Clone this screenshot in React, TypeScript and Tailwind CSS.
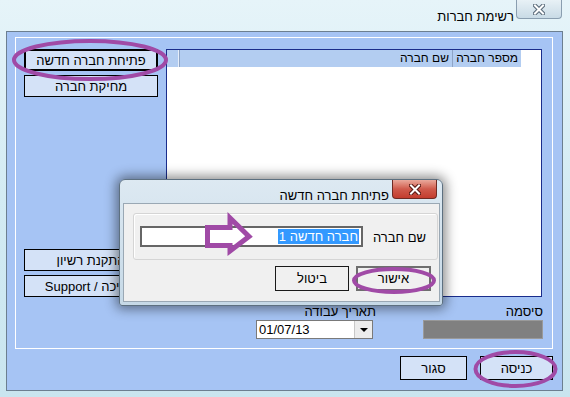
import React from "react";

function WinX({ light }: { light?: boolean }) {
  return (
    <svg width="12" height="11" viewBox="0 0 12 11">
      <path d="M2 1.5 L10 9.5 M10 1.5 L2 9.5" stroke={light ? "#5c6c7b" : "#5a1a14"} strokeWidth="4.2" strokeLinecap="square" />
      <path d="M2 1.5 L10 9.5 M10 1.5 L2 9.5" stroke="#ffffff" strokeWidth="2" strokeLinecap="square" />
    </svg>
  );
}

function Btn({ children, className = "" }: { children: React.ReactNode; className?: string }) {
  return (
    <div
      dir="rtl"
      className={`flex h-[22px] w-[134px] items-center justify-center overflow-hidden whitespace-nowrap border border-black bg-[#d4e2f7] text-[13px] leading-[15px] ${className}`}
    >
      {children}
    </div>
  );
}

export default function App() {
  return (
    <div className="relative h-[397px] w-[570px] overflow-hidden bg-gradient-to-b from-[#e6f4f9] via-[#d3ebf3] to-[#c9e5ef] font-['Liberation_Sans','DejaVu_Sans',sans-serif] text-[13px] text-black">
      {/* title bar */}
      <div className="flex h-[31px] items-start justify-end pr-[8px]">
        <div dir="rtl" className="pr-[2px] pt-[9px] leading-[15px]">רשימת חברות</div>
        <div className="flex h-[19px] w-[46px] items-center justify-center rounded-b-[4px] border border-t-0 border-[#8a9eb0] bg-gradient-to-b from-[#e8f1f6] to-[#c9dbe6]">
          <WinX light />
        </div>
      </div>

      {/* client area */}
      <div className="mx-[6px] flex h-[360px] w-[557px] flex-col border border-[#6c7f90] bg-[#a6c4f4]">
        {/* group box */}
        <div className="ml-[8px] mr-[9px] mt-[5px] flex h-[312px] flex-col border border-white">
          <div className="flex h-[259px] gap-[8px] pl-[8px] pr-[9px] pt-[11px]">
            {/* left buttons */}
            <div className="flex w-[134px] flex-col">
              <Btn className="border-2 border-[#6a6a6a]">פתיחת חברה חדשה</Btn>
              <Btn className="mt-[4px]">מחיקת חברה</Btn>
              <Btn className="mt-auto">התקנת רשיון</Btn>
              <Btn className="mt-[4px]">תמיכה / Support</Btn>
            </div>
            {/* list */}
            <div className="h-[248px] w-[376px] border border-[#1a2d8c] bg-white">
              <div className="flex h-[17px] whitespace-nowrap text-[12px]">
                <div className="h-full w-[12px] border-r border-[#e6eefa] bg-[#b3cdf1]" />
                <div dir="rtl" className="flex h-full w-[273px] items-center border-l border-[#8ea4c6] bg-[#b3cdf1] pr-[3px] leading-[15px]">
                  שם חברה
                </div>
                <div dir="rtl" className="flex h-full w-[69px] items-center overflow-hidden border-l border-[#8ea4c6] bg-[#b3cdf1] pr-[3px] leading-[15px]">
                  מספר חברה
                </div>
              </div>
            </div>
          </div>
          {/* bottom fields */}
          <div className="mt-[7px] flex justify-end gap-[47px] pr-[9px]">
            <div className="flex w-[120px] flex-col items-end">
              <div dir="rtl" className="leading-[15px]">תאריך עבודה</div>
              <div className="mr-[3px] mt-[1px] flex h-[19px] w-[117px] border border-[#7a7a7a] bg-white">
                <div className="flex-1 pl-[2px] text-[13px] leading-[17px]">01/07/13</div>
                <div className="flex w-[18px] items-center justify-center border-l border-[#c8c8c8] bg-[#ececec]">
                  <svg width="8" height="4" viewBox="0 0 8 4">
                    <path d="M0 0 L8 0 L4 4 Z" fill="#000" />
                  </svg>
                </div>
              </div>
            </div>
            <div className="flex w-[120px] flex-col items-end">
              <div dir="rtl" className="leading-[15px]">סיסמה</div>
              <div className="mt-[1px] h-[19px] w-[120px] border border-[#9a9a9a] bg-[#808080]" />
            </div>
          </div>
        </div>
        {/* bottom buttons */}
        <div className="mt-[7px] flex justify-end gap-[13px] pr-[9px]">
          <div className="flex h-[24px] w-[67px] items-center justify-center border border-black bg-[#d4e2f7] leading-[15px]">סגור</div>
          <div className="flex h-[24px] w-[73px] items-center justify-center border border-black bg-[#d4e2f7] leading-[15px]">כניסה</div>
        </div>
      </div>

      {/* dialog */}
      <div className="absolute left-[119px] top-[179px] flex h-[127px] w-[324px] flex-col rounded-t-[6px] rounded-b-[3px] border border-[#5d7080] bg-gradient-to-b from-[#dde9f2] to-[#c6d9e7] shadow-[0_0_12px_3px_rgba(0,0,0,0.45)]">
        <div className="flex h-[23px] items-start justify-end pr-[5px]">
          <div dir="rtl" className="pr-[3px] pt-[8px] leading-[15px]">פתיחת חברה חדשה</div>
          <div className="flex h-[19px] w-[45px] items-center justify-center rounded-b-[4px] border border-t-0 border-[#6e2b24] bg-gradient-to-b from-[#e9a99c] via-[#cf5a4c] to-[#c23c2e]">
            <WinX />
          </div>
        </div>
        <div className="ml-[3px] mr-[2px] flex h-[99px] flex-col border border-[#9aa8b4] bg-[#f0f0f0]">
          <div className="ml-[9px] mr-[1px] mt-[9px] flex h-[47px] items-center justify-end rounded-[3px] border border-[#d5d5d5] shadow-[inset_1px_1px_0_#ffffff]">
            <div dir="rtl" className="flex h-[21px] w-[223px] items-center border-2 border-[#666666] bg-white pr-[2px]">
              <span className="bg-[#3399ff] px-[1px] leading-[15px] text-white">חברה חדשה 1</span>
            </div>
            <div dir="rtl" className="ml-[10px] mr-[11px] mt-[1px] leading-[15px]">שם חברה</div>
          </div>
          <div className="mt-[6px] flex justify-end gap-[7px] pr-[8px]">
            <div className="flex h-[25px] w-[74px] items-center justify-center border border-[#1a1a1a] bg-[#f0f0f0] leading-[15px]">ביטול</div>
            <div className="flex h-[25px] w-[75px] items-center justify-center border-2 border-[#6e6e6e] bg-[#f0f0f0] leading-[15px]">אישור</div>
          </div>
        </div>
      </div>

      {/* annotations */}
      <svg className="pointer-events-none absolute inset-0" width="570" height="397" viewBox="0 0 570 397">
        <g fill="none" stroke="#a04aa6" strokeWidth="4">
          <ellipse cx="90" cy="60" rx="76" ry="19" />
          <ellipse cx="394" cy="280.5" rx="40" ry="11.5" />
          <ellipse cx="515.5" cy="369" rx="40" ry="17" />
          <polygon
            points="207.5,227.5 230,227.5 230,218 249,236.5 230,251 230,245.5 207.5,245.5"
            strokeWidth="5"
            strokeLinejoin="miter"
          />
        </g>
      </svg>
    </div>
  );
}
